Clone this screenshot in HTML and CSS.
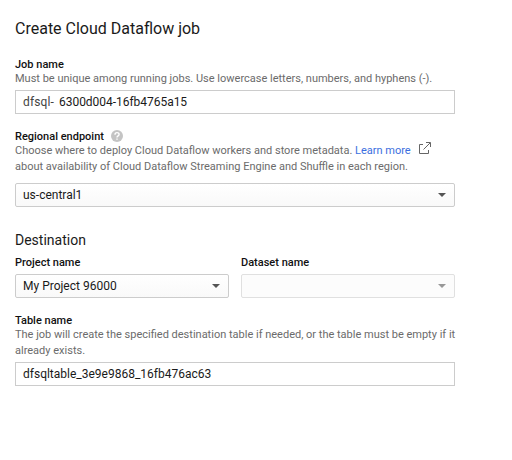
FILE: index.html
```html
<!DOCTYPE html>
<html lang="en">
<head>
<meta charset="utf-8">
<title>Create Cloud Dataflow job</title>
<link rel="stylesheet" href="styles.css">
</head>
<body>
<main class="panel">
  <h1 class="title">Create Cloud Dataflow job</h1>
  <section class="field job">
    <div class="label">Job name</div>
    <p class="hint job-hint">Must be unique among running jobs. Use lowercase letters, numbers, and hyphens (-).</p>
    <div class="control"><span class="prefix">dfsql-</span><span class="job-value">6300d004-16fb4765a15</span></div>
  </section>
  <section class="field region">
    <div class="label">Regional endpoint
      <svg class="help" viewBox="0 0 12 12"><circle cx="6" cy="6" r="6"/><path d="M4 4.7C4 1.9 8.1 2 8.1 4.5C8.1 5.9 6 5.8 6 7.5M6 8.4V9.8"/></svg>
    </div>
    <p class="hint region-hint"><span class="line region-line">Choose where to deploy Cloud Dataflow workers and store metadata. <a class="link">Learn more</a></span>
      <svg class="external" viewBox="0 0 12 12"><path d="M4 2.5H.5V11.5H9.5V8M7 .5H11.5V5M11.2 .8L4.5 7.5"/></svg><br><span class="line about-line">about availability of Cloud Dataflow Streaming Engine and Shuffle in each region.</span></p>
    <div class="control select"><span class="region-value">us-central1</span><i class="arrow"></i></div>
  </section>
  <h2 class="subtitle">Destination</h2>
  <div class="columns">
    <section><div class="label">Project name</div><div class="control select"><span class="project-value">My Project 96000</span><i class="arrow"></i></div></section>
    <section><div class="label">Dataset name</div><div class="control select disabled"><i class="arrow"></i></div></section>
  </div>
  <section class="field table">
    <div class="label">Table name</div>
    <p class="hint"><span class="line table-line">The job will create the specified destination table if needed, or the table must be empty if it</span><br><span class="line">already exists.</span></p>
    <div class="control"><span class="table-value">dfsqltable_3e9e9868_16fb476ac63</span></div>
  </section>
</main>
</body>
</html>
```
FILE: styles.css
```css
* { box-sizing: border-box; }
body { margin: 0; background: #fff; color: #1a1a1a; font: 12px/16px Roboto, sans-serif; }
.panel { width: 455px; padding: 18px 0 0 15px; }
.title { margin: 0 0 18px; font-size: 16px; line-height: 22px; font-weight: 400; }
.label { height: 14px; color: #111; font-size: 11px; line-height: 14px; font-weight: 500; white-space: nowrap; }
.hint { margin: 0; font-size: 11px; line-height: 16px; color: #6b6b6b; white-space: nowrap; }
.job .hint { height: 18px; line-height: 14px; }
.control { display: flex; align-items: center; height: 24px; padding: 0 8px 0 7px; border: 1px solid #ccc; background: #fff; white-space: nowrap; }
.prefix { width: 36px; color: #444; letter-spacing: .15px; }
.job-value { letter-spacing: -.03px; }
.region { margin-top: 18px; }
.region .hint { margin-bottom: 8px; }
.region .label { display: flex; align-items: center; height: 10px; }
.help { width: 12px; height: 12px; margin: -2px 0 0 7px; fill: #c4c4c4; }
.help path { fill: none; stroke: #fff; stroke-width: 1.4; }
.link { color: #3b6fe0; }
.external { width: 12px; height: 12px; margin-left: 6px; overflow: visible; }
.external path { fill: none; stroke: #666; }
.select { justify-content: space-between; border-radius: 2px; background: linear-gradient(#fff, #f9f9f9); }
.arrow { width: 0; height: 0; margin-left: auto; border: 4px solid transparent; border-top-color: #555; border-bottom: 0; }
.subtitle { margin: 24px 0 7px; font-size: 14px; line-height: 18px; font-weight: 400; }
.columns { display: grid; grid-template-columns: 214px 214px; gap: 12px; }
.columns .label { height: 18px; }
.disabled { border-color: #e0e0e0; background: #fcfcfc; }
.disabled .arrow { opacity: .6; }
.table { margin-top: 16px; }
.table .label { height: 13px; }
.table .hint { margin-bottom: 3px; }
```
